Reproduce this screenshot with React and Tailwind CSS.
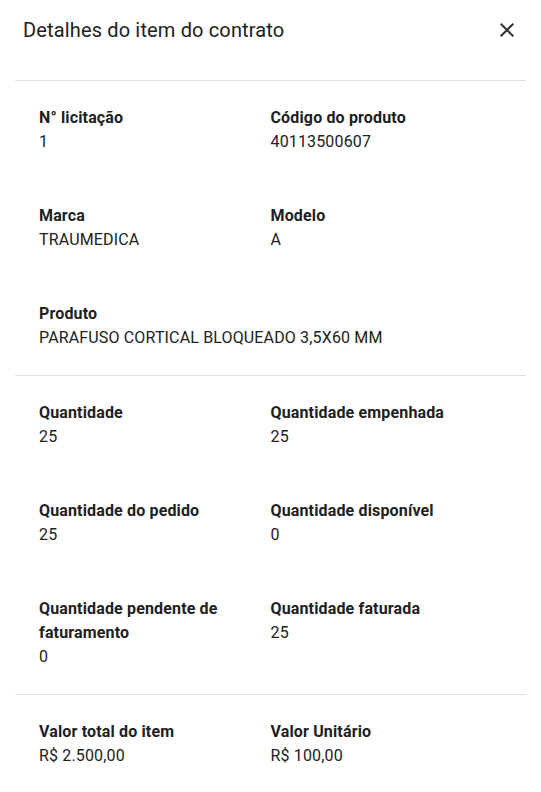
import React from "react";

const sections = [
  [
    { label: "N° licitação", value: "1" },
    { label: "Código do produto", value: "40113500607" },
    { label: "Marca", value: "TRAUMEDICA" },
    { label: "Modelo", value: "A" },
    { label: "Produto", value: "PARAFUSO CORTICAL BLOQUEADO 3,5X60 MM", full: true },
  ],
  [
    { label: "Quantidade", value: "25" },
    { label: "Quantidade empenhada", value: "25" },
    { label: "Quantidade do pedido", value: "25" },
    { label: "Quantidade disponível", value: "0" },
    { label: "Quantidade pendente de faturamento", value: "0" },
    { label: "Quantidade faturada", value: "25" },
  ],
  [
    { label: "Valor total do item", value: "R$ 2.500,00" },
    { label: "Valor Unitário", value: "R$ 100,00" },
  ],
];

function Field({ label, value, full }) {
  return (
    <div className={full ? "col-span-2" : "pr-2"}>
      <p className="text-base leading-6 tracking-[0.15px] font-bold text-[#212121]">{label}</p>
      <p className="text-base leading-6 tracking-[0.15px] text-[#212121]">{value}</p>
    </div>
  );
}

export default function App() {
  return (
    <div className="w-[541px] h-[792px] bg-white font-['Roboto',sans-serif] overflow-hidden">
      <div className="flex items-center justify-between pl-[23px] pr-[22px] h-[60px]">
        <h2 className="text-[20px] leading-8 tracking-[0.15px] text-[#212121]">Detalhes do item do contrato</h2>
        <button className="w-6 h-6 flex items-center justify-center text-[#333]">
          <svg viewBox="0 0 24 24" className="w-6 h-6" fill="currentColor">
            <path d="M19 6.41 17.59 5 12 10.59 6.41 5 5 6.41 10.59 12 5 17.59 6.41 19 12 13.41 17.59 19 19 17.59 13.41 12z" />
          </svg>
        </button>
      </div>
      <div className="px-[15px] pt-5">
        {sections.map((fields, i) => (
          <div key={i} className="border-t border-[#e0e0e0] px-6 pt-[25px] pb-[25px]">
            <div className="grid grid-cols-2 gap-y-[50px]">
              {fields.map((f) => (
                <Field key={f.label} {...f} />
              ))}
            </div>
          </div>
        ))}
      </div>
    </div>
  );
}
